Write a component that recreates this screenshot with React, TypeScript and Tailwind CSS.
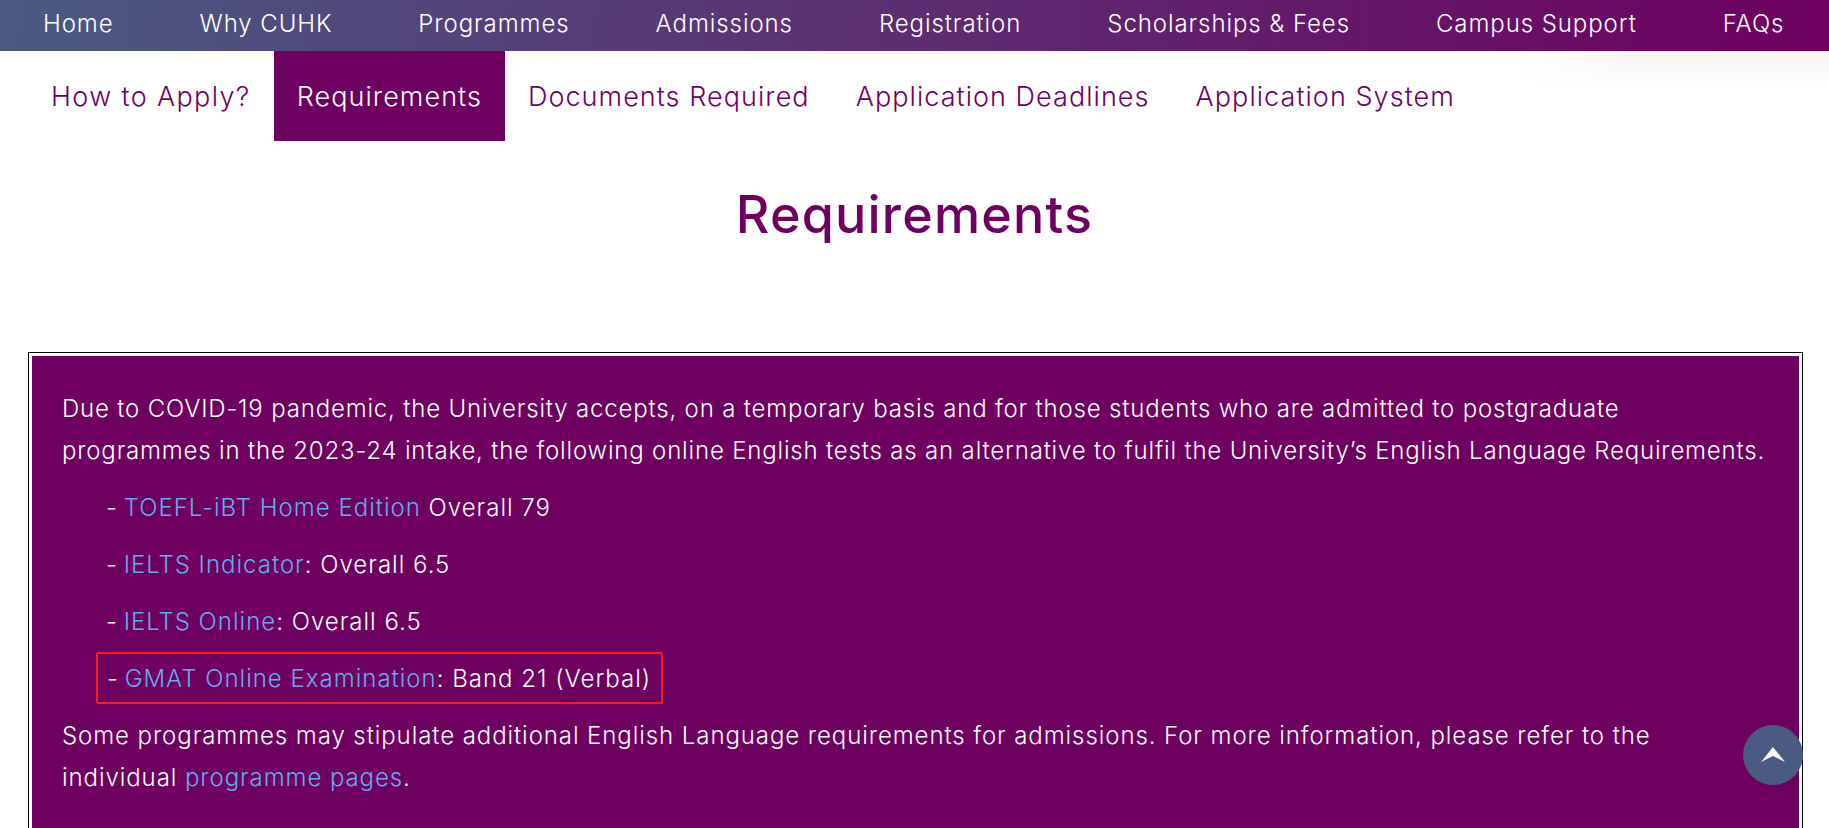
const navItems = ["Home", "Why CUHK", "Programmes", "Admissions", "Registration", "Scholarships & Fees", "Campus Support", "FAQs"]
const tabs = ["How to Apply?", "Requirements", "Documents Required", "Application Deadlines", "Application System"]

function Link({ children }: { children: React.ReactNode }) {
  return <a className="text-[#66aaf0]">{children}</a>
}

function Dash() {
  return <span className="tracking-normal">- </span>
}

export default function App() {
  return (
    <div className="relative h-screen overflow-hidden bg-white font-['Inter',sans-serif] text-[#6e0060]">
      <nav className="flex h-[51px] items-center bg-[linear-gradient(95deg,#4a5a82,#6e0060)] pb-[3px] text-[24px] font-[350] tracking-[0.92px] text-white">
        {navItems.map((item) => (
          <a key={item} className="px-[43px] whitespace-nowrap">
            {item}
          </a>
        ))}
      </nav>

      <div className="flex pl-[28px] text-[27px] font-light tracking-[1.05px]">
        {tabs.map((tab) => (
          <a
            key={tab}
            className={
              tab === "Requirements"
                ? "flex h-[90px] items-center bg-[#6e0060] px-[23px] pt-[2px] whitespace-nowrap text-white"
                : "flex h-[90px] items-center px-[23px] pt-[2px] whitespace-nowrap first:tracking-[1.35px]"
            }
          >
            {tab}
          </a>
        ))}
      </div>

      <h1 className="mt-[42px] text-center text-[52px] leading-[64px] font-medium tracking-[1.2px]">Requirements</h1>

      <div className="mr-[26px] ml-[28px] mt-[105px] border border-black p-[3px]">
        <div className="h-[600px] bg-[#6e0060] pt-[32px] pr-[31px] pl-[30px] text-[24px] leading-[42px] font-[350] tracking-[0.82px] text-white">
          <p>
            Due to COVID-19 pandemic, the University accepts, on a temporary basis and for those students who are admitted to postgraduate
            <br />
            programmes in the 2023-24 intake, the following online English tests as an alternative to fulfil the University’s English Language Requirements.
          </p>
          <div className="mt-[15px] flex flex-col gap-[15px] pl-[44px] tracking-[1px]">
            <p>
              <Dash />
              <Link>TOEFL-iBT Home Edition</Link> Overall 79
            </p>
            <p>
              <Dash />
              <Link>IELTS Indicator</Link>: Overall 6.5
            </p>
            <p>
              <Dash />
              <Link>IELTS Online</Link>: Overall 6.5
            </p>
            <p className="-mx-[10px] -mt-[6px] -mb-[4px] w-fit rounded-[2px] border-2 border-[#ff1a0f] pt-[4px] pr-[10px] pb-[2px] pl-[9px]">
              <Dash />
              <Link>GMAT Online Examination</Link>: Band 21 (Verbal)
            </p>
          </div>
          <p className="mt-[15px] tracking-[0.92px]">
            Some programmes may stipulate additional English Language requirements for admissions. For more information, please refer to the
            <br />
            individual <Link>programme pages</Link>.
          </p>
        </div>
      </div>

      <div className="absolute top-[51px] right-0 h-[40px] w-[320px] bg-[linear-gradient(180deg,#f4f4f4,#ffffff)] [mask-image:linear-gradient(90deg,transparent,black_40%)]" />

      <button className="absolute top-[725px] left-[1743px] flex h-[60px] w-[60px] items-center justify-center rounded-full bg-[#4a5a82]">
        <svg width="24" height="16" viewBox="0 0 24 16" fill="white">
          <path d="M12 0 L24 15 L12 9 L0 15 Z" />
        </svg>
      </button>
    </div>
  )
}
